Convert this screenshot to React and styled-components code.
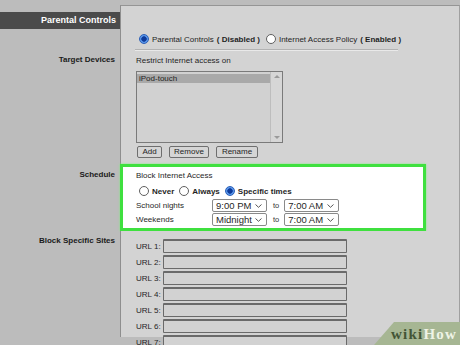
import React from 'react';
import styled, { createGlobalStyle } from 'styled-components';

const Global = createGlobalStyle`
  html, body { margin: 0; padding: 0; background: #bcbcbc; overflow: hidden; }
  body { font-family: "Liberation Sans", Arial, sans-serif; font-size: 8px; color: #1f1f1f; }
`;

const Page = styled.div`
  width: 460px;
  height: 345px;
  padding-top: 5px;
  box-sizing: border-box;
  overflow: hidden;
  position: relative;
`;

const Section = styled.div`
  display: grid;
  grid-template-columns: 120px 340px;
`;

const Side = styled.div`
  padding-top: ${p => p.$top || 0}px;
  padding-right: 5px;
  text-align: right;
  font-weight: bold;
  font-size: 8px;
  line-height: 10px;
  color: #1a1a1a;
`;

const HeaderBar = styled.div`
  margin-top: 7px;
  height: 17px;
  margin-right: -5px;
  background: #4b4b4b;
  color: #fff;
  font-weight: bold;
  font-size: 9px;
  line-height: 17px;
  padding-right: 4px;
`;

const Body = styled.div`
  background: #d3d3d3;
  border-left: ${p => (p.$bare ? 'none' : '1px solid #8e8e8e')};
  border-right: 1px solid #a0a0a0;
  border-top: ${p => (p.$first ? '1px solid #959595' : 'none')};
  box-sizing: border-box;
  padding: ${p => p.$pad || '0 0 0 15px'};
`;

const RadioRow = styled.div`
  display: flex;
  align-items: center;
  height: 12px;
  margin-left: ${p => p.$indent || 0}px;
  margin-top: ${p => p.$mt || 0}px;
`;

const Radio = styled.span`
  display: inline-block;
  flex: none;
  width: 10px;
  height: 10px;
  border-radius: 50%;
  box-sizing: border-box;
  border: 1px solid ${p => (p.$on ? '#2b5fb8' : '#5f5f5f')};
  background: ${p => (p.$on ? 'radial-gradient(circle, #0d3a9a 0 2.4px, #5a97ea 3px)' : '#fff')};
  margin-right: 3px;
`;

const Label = styled.span`
  font-weight: ${p => (p.$bold ? 'bold' : 'normal')};
  margin-right: ${p => p.$mr || 0}px;
  white-space: nowrap;
`;

const Separator = styled.div`
  margin: 4px 0 0 -4px;
  width: 263px;
  border-top: 1px solid #b2b2b2;
  border-bottom: 1px solid #e9e9e9;
`;

const Line = styled.div`
  height: 10px;
  line-height: 10px;
  padding-top: ${p => p.$top || 0}px;
`;

const ListBox = styled.div`
  margin-top: 5px;
  width: 147px;
  height: 72px;
  box-sizing: border-box;
  border: 1px solid #7a7a7a;
  background: #d1d1d1;
  display: flex;
`;

const ListItems = styled.div`
  flex: 1;
  padding: 2px 0 0 0;
`;

const ListItem = styled.div`
  height: 9px;
  line-height: 9px;
  padding-left: 2px;
  background: ${p => (p.$sel ? '#a9a9a9' : 'transparent')};
`;

const ScrollBar = styled.div`
  width: 11px;
  border-left: 1px solid #bdbdbd;
  background: #d6d6d6;
  display: flex;
  flex-direction: column;
  justify-content: space-between;
  align-items: center;
  padding: 3px 0;
`;

const Arrow = styled.span`
  width: 0;
  height: 0;
  border-left: 3px solid transparent;
  border-right: 3px solid transparent;
  ${p => (p.$up ? 'border-bottom: 3px solid #9a9a9a;' : 'border-top: 3px solid #9a9a9a;')}
`;

const ButtonRow = styled.div`
  display: flex;
  gap: 7px;
  margin: 3px 0 0 1px;
  padding-bottom: 6px;
`;

const Button = styled.div`
  width: ${p => p.$w}px;
  height: 12px;
  box-sizing: border-box;
  border: 1px solid #6e6e6e;
  border-radius: 2px;
  background: #d5d5d5;
  text-align: center;
  line-height: 10px;
  font-size: 8px;
`;

const GreenBox = styled.div`
  width: 306px;
  height: 67px;
  box-sizing: border-box;
  border: 3px solid #3fe03f;
  box-shadow: 0 0 2px #7cf07c;
  background: #fff;
  padding: 4px 0 0 13px;
`;

const TimeRow = styled.div`
  display: flex;
  align-items: center;
  height: 13px;
  margin-top: ${p => p.$mt || 0}px;
`;

const TimeLabel = styled.span`
  width: 76px;
  flex: none;
`;

const Select = styled.div`
  width: ${p => p.$w}px;
  height: 13px;
  box-sizing: border-box;
  border: 1px solid #8a8a8a;
  border-radius: 2px;
  background: #fff;
  display: flex;
  align-items: center;
  justify-content: space-between;
  padding: 0 4px 0 3px;
  font-size: 9.5px;
  flex: none;
`;

const To = styled.span`
  margin: 0 5px 0 6px;
  font-size: 7.5px;
  color: #333;
`;

const UrlList = styled.div`
  padding-top: 8px;
  display: flex;
  flex-direction: column;
  gap: 2px;
  height: 106px;
  box-sizing: border-box;
`;

const UrlRow = styled.div`
  display: flex;
  align-items: center;
  height: 14px;
`;

const UrlLabel = styled.span`
  width: 27px;
  flex: none;
  font-size: 8px;
`;

const UrlInput = styled.div`
  width: 184px;
  height: 14px;
  box-sizing: border-box;
  border: 1px solid #6a6a6a;
  border-top-width: 2px;
  border-radius: 1px;
  background: #d2d2d2;
`;

const Watermark = styled.div`
  position: absolute;
  right: 0;
  bottom: 0;
  width: 86px;
  height: 23px;
  background: #a6b693;
  clip-path: polygon(20px 0, 100% 0, 100% 100%, 0 100%);
  box-sizing: border-box;
  padding: 3px 3px 0 12px;
  font-family: "Liberation Serif", "DejaVu Serif", serif;
  font-weight: bold;
  font-size: 15px;
  letter-spacing: 1.2px;
  line-height: 18px;
  text-align: right;
`;

const Wiki = styled.span`
  color: #435536;
`;

const How = styled.span`
  color: #eef3e6;
`;

const Chevron = () => (
  <svg width="7" height="4" viewBox="0 0 7 4">
    <path d="M0.5 0.5 L3.5 3.3 L6.5 0.5" fill="none" stroke="#444" strokeWidth="0.9" />
  </svg>
);

const urls = [1, 2, 3, 4, 5, 6, 7];

export default function App() {
  return (
    <Page>
      <Global />
      <Section>
        <Side>
          <HeaderBar>Parental Controls</HeaderBar>
        </Side>
        <Body $first $pad="27px 0 0 18px">
          <RadioRow>
            <Radio $on />
            <Label $mr={3}>Parental Controls</Label>
            <Label $bold $mr={6}>( Disabled )</Label>
            <Radio />
            <Label $mr={3}>Internet Access Policy</Label>
            <Label $bold>( Enabled )</Label>
          </RadioRow>
          <Separator />
        </Body>
      </Section>

      <Section>
        <Side $top={4}>Target Devices</Side>
        <Body>
          <Line $top={5}>Restrict Internet access on</Line>
          <ListBox>
            <ListItems>
              <ListItem $sel>iPod-touch</ListItem>
            </ListItems>
            <ScrollBar>
              <Arrow $up />
              <Arrow />
            </ScrollBar>
          </ListBox>
          <ButtonRow>
            <Button $w={25}>Add</Button>
            <Button $w={40}>Remove</Button>
            <Button $w={42}>Rename</Button>
          </ButtonRow>
        </Body>
      </Section>

      <Section>
        <Side $top={6}>Schedule</Side>
        <Body $bare $pad="0">
          <GreenBox>
            <Line>Block Internet Access</Line>
            <RadioRow $mt={4} $indent={3}>
              <Radio />
              <Label $bold $mr={5}>Never</Label>
              <Radio />
              <Label $bold $mr={5}>Always</Label>
              <Radio $on />
              <Label $bold>Specific times</Label>
            </RadioRow>
            <TimeRow $mt={2}>
              <TimeLabel>School nights</TimeLabel>
              <Select $w={55}>9:00 PM<Chevron /></Select>
              <To>to</To>
              <Select $w={55}>7:00 AM<Chevron /></Select>
            </TimeRow>
            <TimeRow $mt={1}>
              <TimeLabel>Weekends</TimeLabel>
              <Select $w={55}>Midnight<Chevron /></Select>
              <To>to</To>
              <Select $w={55}>7:00 AM<Chevron /></Select>
            </TimeRow>
          </GreenBox>
        </Body>
      </Section>

      <Section>
        <Side $top={5}>Block Specific Sites</Side>
        <Body>
          <UrlList>
            {urls.map(n => (
              <UrlRow key={n}>
                <UrlLabel>URL {n}:</UrlLabel>
                <UrlInput />
              </UrlRow>
            ))}
          </UrlList>
        </Body>
      </Section>

      <Watermark>
        <Wiki>wiki</Wiki>
        <How>How</How>
      </Watermark>
    </Page>
  );
}
